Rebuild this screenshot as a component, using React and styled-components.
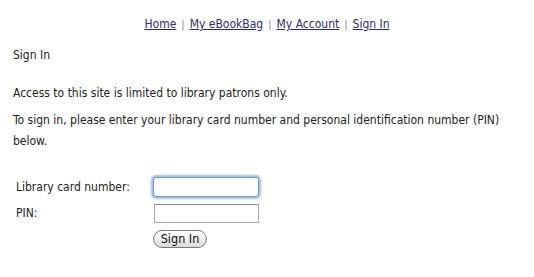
import React from "react";
import styled, { createGlobalStyle } from "styled-components";

const Global = createGlobalStyle`
  html, body { margin: 0; padding: 0; background: #fff; }
  body {
    font-family: "DejaVu Sans Condensed", "DejaVu Sans", sans-serif;
    font-size: 12px;
    color: #222;
  }
`;

const Page = styled.div`
  padding: 12px 13px 0 13px;
`;

const Nav = styled.nav`
  display: flex;
  justify-content: center;
  align-items: center;
  gap: 5px;
  height: 24px;
`;

const NavLink = styled.a`
  color: #2e2e66;
  text-decoration: underline;
  font-size: 12px;
`;

const Sep = styled.span`
  color: #888;
  font-size: 11px;
`;

const Heading = styled.div`
  margin-top: 11px;
  line-height: 16px;
`;

const Para = styled.p`
  margin: ${(p) => p.$top || 0}px 0 0 0;
  line-height: 21px;
`;

const Form = styled.div`
  display: grid;
  grid-template-columns: 137px 110px;
  margin-top: 22px;
  padding-left: 3px;
  align-items: center;
`;

const Label = styled.label`
  height: ${(p) => p.$h}px;
  display: flex;
  align-items: center;
`;

const Cell = styled.div`
  height: ${(p) => p.$h}px;
  display: flex;
  align-items: ${(p) => (p.$top ? "flex-start" : "center")};
  padding-top: ${(p) => p.$top || 0}px;
`;

const Input = styled.input`
  box-sizing: border-box;
  width: ${(p) => (p.$focus ? 106 : 105)}px;
  height: ${(p) => (p.$focus ? 20 : 19)}px;
  margin: 0 0 0 ${(p) => (p.$focus ? 0 : 1)}px;
  padding: 0 3px;
  border: 1px solid ${(p) => (p.$focus ? "#6a9ac9" : "#a8a8a8")};
  border-top-color: ${(p) => (p.$focus ? "#6a9ac9" : "#8a8a8a")};
  border-radius: ${(p) => (p.$focus ? 3 : 0)}px;
  box-shadow: ${(p) => (p.$focus ? "0 0 2px 2px #9dc0e4" : "none")};
  outline: none;
  background: #fff;
`;

const Button = styled.button`
  box-sizing: border-box;
  width: 54px;
  height: 18px;
  padding: 0;
  border: 1px solid #7a7a7a;
  border-radius: 9px;
  background: linear-gradient(#ffffff, #ebebeb 55%, #dcdcdc);
  font-family: "DejaVu Sans Condensed", "DejaVu Sans", sans-serif;
  font-size: 12.5px;
  color: #111;
  line-height: 16px;
`;

export default function App() {
  return (
    <>
      <Global />
      <Page>
        <Nav>
          <NavLink href="#">Home</NavLink>
          <Sep>|</Sep>
          <NavLink href="#">My eBookBag</NavLink>
          <Sep>|</Sep>
          <NavLink href="#">My Account</NavLink>
          <Sep>|</Sep>
          <NavLink href="#">Sign In</NavLink>
        </Nav>
        <Heading>Sign In</Heading>
        <Para $top={20}>Access to this site is limited to library patrons only.</Para>
        <Para $top={6}>
          To sign in, please enter your library card number and personal
          identification number (PIN) below.
        </Para>
        <Form>
          <Label $h={26}>Library card number:</Label>
          <Cell $h={26}>
            <Input $focus />
          </Cell>
          <Label $h={26}>PIN:</Label>
          <Cell $h={26}>
            <Input />
          </Cell>
          <span />
          <Cell $h={26} $top={4}>
            <Button>Sign In</Button>
          </Cell>
        </Form>
      </Page>
    </>
  );
}
